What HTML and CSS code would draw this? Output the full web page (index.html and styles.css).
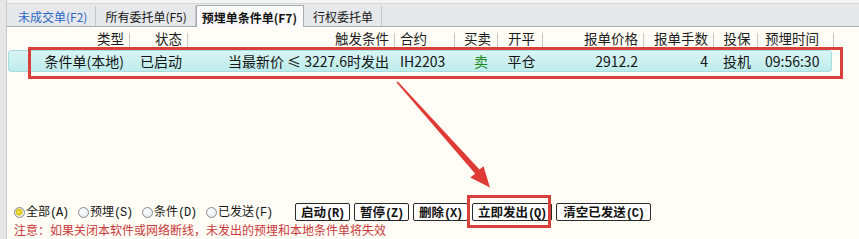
FILE: index.html
```
<!DOCTYPE html>
<html lang="zh-CN">
<head>
<meta charset="utf-8">
<link rel="stylesheet" href="styles.css">
</head>
<body>
<div class="win">
  <div class="side"></div>
  <div class="main">
    <div class="topband"></div>
    <div class="tabs">
      <div class="tab tab-blue">未成交单(F2)</div>
      <div class="tab">所有委托单(F5)</div>
      <div class="tab tab-active">预埋单条件单(F7)</div>
      <div class="tab">行权委托单</div>
    </div>
    <div class="grid head">
      <div class="c r">类型</div>
      <div class="c r">状态</div>
      <div class="c r">触发条件</div>
      <div class="c l">合约</div>
      <div class="c m">买卖</div>
      <div class="c m">开平</div>
      <div class="c r">报单价格</div>
      <div class="c r">报单手数</div>
      <div class="c m">投保</div>
      <div class="c l l7">预埋时间</div>
    </div>
    <div class="rowwrap">
      <div class="grid row">
        <div class="c r">条件单(本地)</div>
        <div class="c r">已启动</div>
        <div class="c r">当最新价 ≤ 3227.6时发出</div>
        <div class="c l">IH2203</div>
        <div class="c r r10 sell">卖</div>
        <div class="c m">平仓</div>
        <div class="c r">2912.2</div>
        <div class="c r">4</div>
        <div class="c m">投机</div>
        <div class="c l l7">09:56:30</div>
      </div>
    </div>
    <div class="bottom">
      <div class="controls">
        <div class="radios">
          <label class="radio"><span class="dot on"></span><span class="lbl">全部<span class="k">(A)</span></span></label>
          <label class="radio"><span class="dot"></span><span class="lbl">预埋<span class="k">(S)</span></span></label>
          <label class="radio"><span class="dot"></span><span class="lbl">条件<span class="k">(D)</span></span></label>
          <label class="radio"><span class="dot"></span><span class="lbl">已发送<span class="k">(F)</span></span></label>
        </div>
        <div class="buttons">
          <button class="btn">启动<span class="k">(R)</span></button>
          <button class="btn">暂停<span class="k">(Z)</span></button>
          <button class="btn">删除<span class="k">(X)</span></button>
          <button class="btn">立即发出<span class="k">(Q)</span></button>
          <button class="btn btn-wide">清空已发送<span class="k">(C)</span></button>
        </div>
      </div>
      <div class="note">注意：如果关闭本软件或网络断线，未发出的预埋和本地条件单将失效</div>
    </div>
  </div>
  <div class="mark mark-row"></div>
  <div class="mark mark-btn"></div>
  <svg class="arrow" width="859" height="239" viewBox="0 0 859 239">
    <polygon points="396.5,82.5 397.8,81.6 479.5,169.5 483.5,166.2 490,187.5 470.2,177.6 475.2,173.8" fill="#e03a36"/>
  </svg>
</div>
</body>
</html>
```
FILE: styles.css
```
* { box-sizing: border-box; }
html, body { margin: 0; padding: 0; }
body {
  width: 859px;
  height: 239px;
  overflow: hidden;
  background: #fffdf5;
  font-family: "Noto Sans CJK SC", "Noto Sans", sans-serif;
  color: #161616;
}
.win {
  position: relative;
  display: flex;
  width: 859px;
  height: 239px;
}
.side {
  width: 7px;
  flex: none;
  background: #e6e6e6;
  border-right: 1px solid #c8c8c8;
}
.main {
  flex: 1;
  display: flex;
  flex-direction: column;
  min-width: 0;
}
.topband {
  height: 4px;
  background: #f4f4f4;
  border-bottom: 1px solid #d6d6d6;
}
.tabs {
  height: 23px;
  display: flex;
  align-items: stretch;
  background: #e6e8eb;
  border-bottom: 1px solid #a8adb2;
  padding-left: 2px;
}
.tab {
  font-size: 12px;
  line-height: 22px;
  padding: 0 8px 0 9px;
  border-right: 1px solid #c2c6ca;
  margin: 2px 0 0;
  white-space: nowrap;
}
.tab-blue { color: #2a67c4; }
.tab-active {
  font-weight: 700;
  background: #fbfbfb;
  border: 1px solid #a8adb2;
  border-bottom: none;
  margin: 1px 0 -1px;
  line-height: 23px;
  padding: 0 6px 0 5px;
  color: #111;
}
.grid {
  display: grid;
  grid-template-columns: 120px 58px 207px 60px 43px 45px 101px 70px 44px 76px;
}
.head {
  height: 23px;
  margin-left: 3px;
  font-size: 13.5px;
  color: #1c1c1c;
}
.head .c {
  position: relative;
  line-height: 23px;
}
.head .c::after {
  content: "";
  position: absolute;
  right: 0;
  top: 6px;
  height: 14px;
  border-right: 1px solid #c9c9c9;
}
.c {
  white-space: nowrap;
  overflow: visible;
}
.r { text-align: right; padding-right: 6px; }
.l { text-align: left; padding-left: 5px; }
.m { text-align: center; padding-left: 2px; }
.l7 { padding-left: 7px; }
.r10 { padding-right: 10px; }
.rowwrap {
  margin-left: 1px;
  width: 824px;
  height: 22px;
  border-radius: 3px;
  background: linear-gradient(#d8f5f4, #bdeceb);
  border: 1px solid #a9dce0;
  overflow: visible;
}
.row {
  margin-left: 1px;
  font-size: 14px;
  line-height: 20px;
  color: #141414;
}
.sell { color: #208a20; }
.bottom {
  margin-top: auto;
  padding-left: 7px;
  padding-bottom: 1px;
}
.controls {
  display: flex;
  align-items: center;
  height: 20px;
}
.radios {
  width: 281px;
  flex: none;
  display: flex;
  font-size: 12px;
}
.radio {
  display: flex;
  align-items: center;
  margin-right: 10px;
  white-space: nowrap;
}
.lbl {
  line-height: 16px;
}
.dot {
  width: 11px;
  height: 11px;
  border-radius: 50%;
  border: 1px solid #8a8f96;
  background: radial-gradient(circle at 40% 40%, #ffffff, #dfe3e8);
  margin-right: 1px;
}
.dot.on {
  background: radial-gradient(circle at 45% 45%, #f3e64a 0, #d8c21a 45%, #f3f1d8 55%, #e6e8ea 100%);
}
.k {
  font-family: "Liberation Mono", monospace;
  font-size: 12px;
  letter-spacing: -1.2px;
}
.buttons {
  display: flex;
  gap: 4px;
}
.btn {
  font-family: "Noto Sans CJK SC", sans-serif;
  font-weight: 700;
  font-size: 12.5px;
  height: 18px;
  line-height: 16px;
  padding: 0 5px;
  background: #ffffff;
  border: 1px solid #2a2a2a;
  border-radius: 2px;
  color: #111;
  white-space: nowrap;
}
.btn-wide { padding: 0 6px; }
.btn .k { font-weight: 700; }
.note {
  font-size: 12px;
  line-height: 16px;
  color: #c8393a;
  white-space: nowrap;
}
.mark {
  position: absolute;
  border: 3px solid #d8403c;
}
.mark-row {
  left: 28px;
  top: 47px;
  width: 815px;
  height: 32px;
}
.mark-btn {
  left: 467px;
  top: 195px;
  width: 84px;
  height: 33px;
}
.arrow {
  position: absolute;
  left: 0;
  top: 0;
  pointer-events: none;
}
```
